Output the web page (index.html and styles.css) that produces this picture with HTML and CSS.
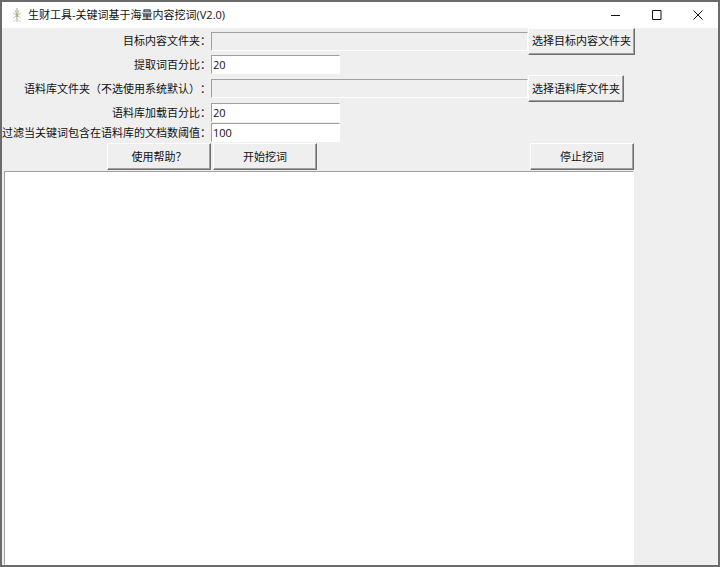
FILE: index.html
```html
<!DOCTYPE html>
<html lang="zh-CN">
<head>
  <meta charset="UTF-8" />
  <title>生财工具-关键词基于海量内容挖词(V2.0)</title>
  <link rel="stylesheet" href="styles.css">
</head>
<body>

  <div class="window">
    <header class="titlebar">
      <svg class="app-icon" viewBox="0 0 16 16" aria-hidden="true">
        <path d="M8 1v5M8 10v5" stroke="#a3a18c" />
        <path d="M4 6l3 2M9 8l3-2M6 3l1 3M10 3L9 6" stroke="#c4c4a0" fill="none" />
        <path d="M4 11l3-2M9 9l3 2" stroke="#d6c8a0" fill="none" />
        <path d="M7 6l2 4M9 6l-2 4" stroke="#8fa676" fill="none" />
        <path d="M4 14h8" stroke="#e2e2d8" />
      </svg>
      <h1>生财工具-关键词基于海量内容挖词(V2.0)</h1>
      <div class="window-controls">
        <button type="button" aria-label="最小化">
          <svg viewBox="0 0 10 10"><path d="M0 5.5h9" /></svg>
        </button>
        <button type="button" aria-label="最大化">
          <svg viewBox="0 0 10 10"><path d="M.5 .5h8.5v9h-8.5z" /></svg>
        </button>
        <button type="button" aria-label="关闭">
          <svg viewBox="0 0 10 10"><path d="M.5 .5l9 9M9.5 .5l-9 9" /></svg>
        </button>
      </div>
    </header>

    <main>
      <form class="settings">
        <label for="target">目标内容文件夹：</label>
        <input id="target" class="path" type="text" readonly />
        <button type="button">选择目标内容文件夹</button>

        <label for="extract">提取词百分比：</label>
        <input id="extract" class="number" type="text" value="20" />

        <label for="corpus">语料库文件夹（不选使用系统默认）：</label>
        <input id="corpus" class="path" type="text" readonly />
        <button type="button">选择语料库文件夹</button>

        <label for="load">语料库加载百分比：</label>
        <input id="load" class="number" type="text" value="20" />

        <label for="threshold">过滤当关键词包含在语料库的文档数阈值：</label>
        <input id="threshold" class="number" type="text" value="100" />

        <button type="button" class="action help">使用帮助？</button>
        <button type="button" class="action">开始挖词</button>
        <button type="button" class="action">停止挖词</button>
      </form>
      <textarea class="log" aria-label="输出"></textarea>
    </main>
  </div>

</body>
</html>
```

FILE: styles.css
```css
* {
  box-sizing: border-box;
}
body {
  margin: 0;
  font-family: "Open Sans", "Noto Sans CJK SC", sans-serif;
  font-size: 11px;
  line-height: 16px;
  color: #111;
  text-spacing-trim: space-all;
}
button, input, textarea {
  font: inherit;
  color: inherit;
  margin: 0;
  border-radius: 0;
  outline: none;
}
.window {
  display: flex;
  flex-direction: column;
  height: 100vh;
  border: 2px solid #6b6b6b;
  background: #efefef;
}

/* title bar */
.titlebar {
  display: flex;
  align-items: center;
  height: 25px;
  padding-left: 7px;
  background: #fff;
}
.app-icon {
  width: 16px;
  height: 16px;
  margin-right: 3px;
}
.titlebar h1 {
  flex: 1;
  margin: 0;
  font-size: 11px;
  font-weight: 400;
}
.window-controls {
  display: flex;
}
.window-controls button {
  display: flex;
  align-items: center;
  justify-content: center;
  width: 41px;
  height: 25px;
  padding: 0;
  border: 0;
  background: none;
}
.window-controls svg {
  width: 10px;
  height: 10px;
  fill: none;
  stroke: #111;
}

/* form */
main {
  flex: 1;
  display: flex;
  flex-direction: column;
  align-items: flex-start;
  min-height: 0;
  border-top: 1px solid #fff;
}
.settings {
  display: grid;
  grid-template-columns: 209px 317px 107px;
  grid-template-rows: 26px 21px 27px 21px 19px 29px;
  align-items: center;
  justify-items: start;
}
.settings label {
  grid-column: 1;
  justify-self: end;
  white-space: nowrap;
}
.settings input {
  height: 19px;
  padding: 0 1px;
  border: 1px solid;
  border-color: #a0a0a0 #fff #fff #a0a0a0;
  background: #fff;
}
.settings .path {
  width: 100%;
  background: #efefef;
}
.settings button {
  height: 27px;
  padding: 0 3px;
  border: 1px solid;
  border-color: #fff #6e6e6e #6e6e6e #fff;
  box-shadow: inset -1px -1px #a0a0a0;
  background: #efefef;
  white-space: nowrap;
}
.settings .number {
  width: 129px;
}
.settings .action {
  width: 104px;
  margin-left: 2px;
}
.settings .help {
  grid-column: 1;
  justify-self: end;
}
.log {
  flex: 1;
  width: 630px;
  max-width: 100%;
  margin-left: 2px;
  padding: 2px;
  border: 1px solid;
  border-color: #a0a0a0 #fff #fff #a0a0a0;
  background: #fff;
  resize: none;
}
```
